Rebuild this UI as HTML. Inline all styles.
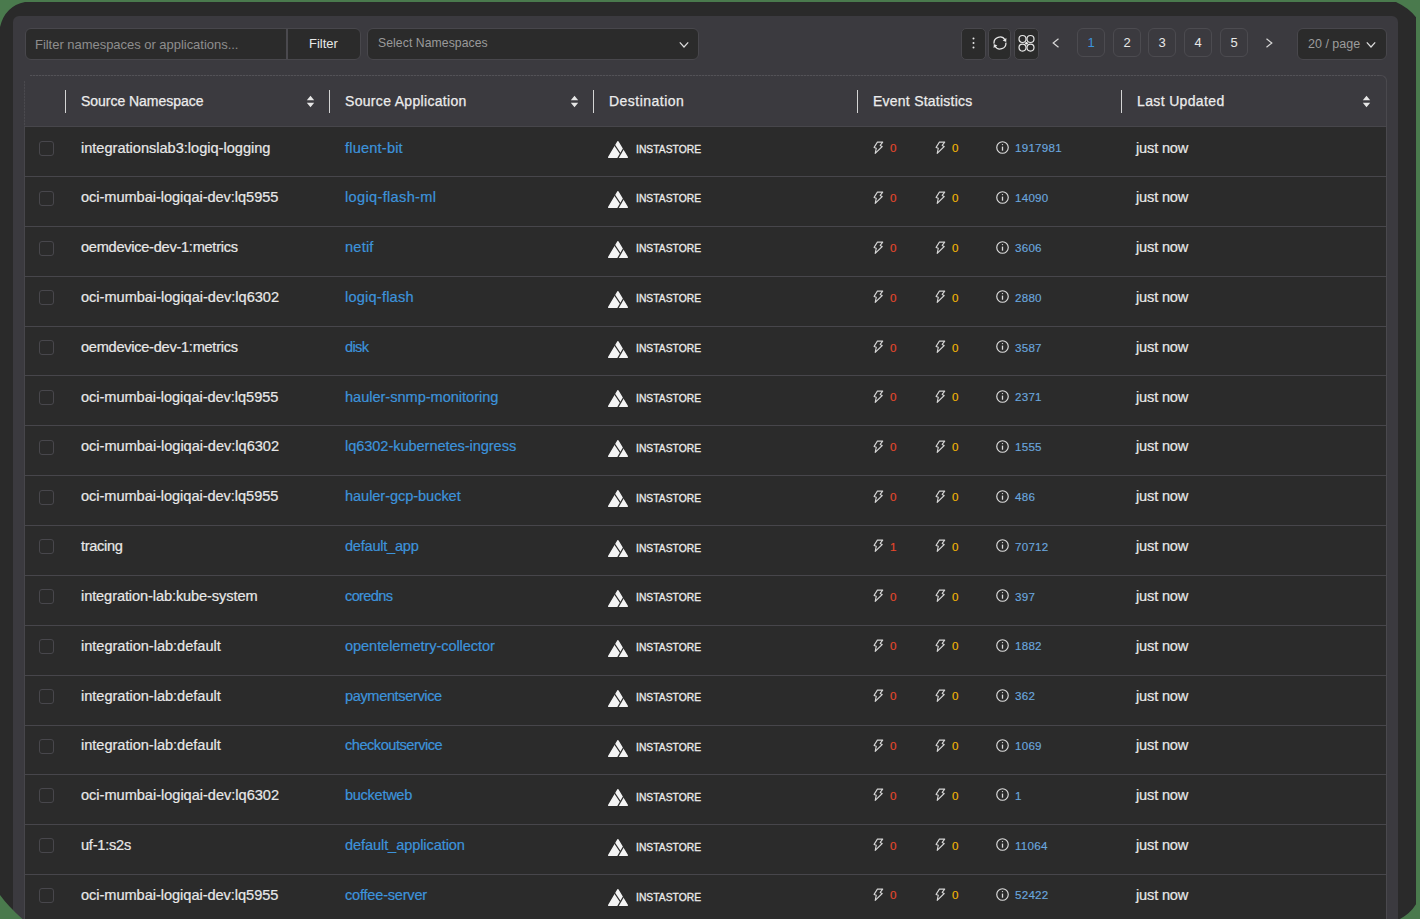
<!DOCTYPE html>
<html><head><meta charset="utf-8">
<style>
*{box-sizing:border-box;margin:0;padding:0}
html,body{width:1420px;height:919px;overflow:hidden;background:#4a7a4d;font-family:"Liberation Sans",sans-serif;color:#e8e8e8}
.frame{position:absolute;left:0;top:2px;width:1416px;height:917px;background:#2a2a2a}
.corners{position:absolute;left:0;top:0;z-index:10}
.panel{position:absolute;left:13px;top:16px;width:1385px;height:960px;background:#3b3a3f;border-radius:6px}
.inp{position:absolute;left:25px;top:28px;width:336px;height:32px;background:#2b2b2b;border:1px solid #48474c;border-radius:6px}
.inp .ph{position:absolute;left:9px;top:8px;font-size:13px;color:#8e8e8e;white-space:nowrap}
.inp .div{position:absolute;left:260px;top:0;width:1.5px;height:30px;background:#4a494e}
.inp .fb{position:absolute;left:283px;top:7px;font-size:13px;color:#e8e8e8}
.sel{position:absolute;left:367px;top:28px;width:332px;height:32px;background:#2b2b2b;border:1px solid #48474c;border-radius:6px}
.sel .ph{position:absolute;left:10px;top:7px;font-size:12.2px;color:#9a9a9a;white-space:nowrap}
.chev{position:absolute}
.ib{position:absolute;top:28px;height:32px;background:#2b2b2b;border:1px solid #48474c;border-radius:5px}
.pg{position:absolute;top:28px;width:28px;height:29px;border:1px solid #4c4b50;border-radius:6px;font-size:13px;text-align:center;line-height:27px;color:#e8e8e8}
.pgs{position:absolute;left:1297px;top:28px;width:90px;height:32px;background:#2b2b2b;border:1px solid #48474c;border-radius:6px}
.pgs .ph{position:absolute;left:10px;top:8px;font-size:12.5px;color:#9c9c9c;white-space:nowrap}
.table{position:absolute;left:24px;top:75px;width:1363px;height:900px;border:1px solid transparent}
.tb-top{position:absolute;left:30px;top:75px;width:1349px;height:1px;background:repeating-linear-gradient(90deg,#535257 0 2px,#424146 2px 3px)}
.tb-l{position:absolute;left:24px;top:81px;width:1px;height:840px;background:#47464b}
.tb-lh{position:absolute;left:24px;top:81px;width:1px;height:45px;background:repeating-linear-gradient(180deg,#4a494e 0 2px,#403f44 2px 3px)}
.tb-r{position:absolute;left:1386px;top:81px;width:1px;height:840px;background:#4a494e}
.tb-tr{position:absolute;left:1379px;top:75px;width:8px;height:7px;border-top:1px solid #4c4b50;border-right:1px solid #4c4b50;border-top-right-radius:6px}
.head{position:absolute;left:0;top:0;width:1361px;height:51px;background:#3b3a3f;border-bottom:1px solid #47464b}
.hs{position:absolute;top:14px;width:1px;height:23px;background:#d4d4d4}
.ht{position:absolute;top:17px;font-size:14px;color:#ececec;white-space:nowrap;-webkit-text-stroke:0.25px #ececec}
.sort{display:block}
.rows{position:absolute;left:0;top:51px;width:1361px;height:900px;background:#2b2b2b}
.row{position:absolute;left:0;width:1361px;height:49.875px;border-bottom:1px solid #47464b;}
.rc{position:absolute;left:0;width:1361px;height:49px}
.cb{position:absolute;left:14px;top:14px;width:15px;height:15px;border:1px solid #48474c;border-radius:3px}
.t{position:absolute;top:12.5px;font-size:14.6px;white-space:nowrap;line-height:18px;-webkit-text-stroke:0.2px currentColor}
.ns{left:56px;color:#e8e8e8}
.app{left:320px;color:#3d93db}
.upd{left:1111px;color:#e8e8e8}
.dest{position:absolute;left:581px;top:12px}
.logo{position:absolute;left:0;top:0}
.ins{position:absolute;left:30px;top:4.5px;font-size:10.3px;font-weight:normal;color:#ececec;white-space:nowrap;-webkit-text-stroke:0.3px #ececec;letter-spacing:0.02px}
.ev{position:absolute;top:14px}
.ev svg{position:absolute;left:0;top:0}
.ev span{position:absolute;top:0.3px;font-size:11.6px;white-space:nowrap;-webkit-text-stroke:0.15px currentColor}
.e1{left:848px} .e1 span{left:17px}
.e2{left:910px} .e2 span{left:17px}
.e3{left:971px} .e3 span{left:19px;letter-spacing:0.25px}
.red{color:#e5482b} .yel{color:#f2b705} .blu{color:#6aa6de}
</style></head><body>
<div class="frame"></div>
<div class="panel"></div>
<div class="inp"><span class="ph" style="letter-spacing:-0.031px">Filter namespaces or applications...</span><div class="div"></div><span class="fb">Filter</span></div>
<div class="sel"><span class="ph" style="letter-spacing:0.081px">Select Namespaces</span>
<svg class="chev" style="left:311px;top:12px" width="10" height="8" viewBox="0 0 10 8"><path d="M0.8 1.4 L5 6 L9.2 1.4" fill="none" stroke="#dedede" stroke-width="1.2"/></svg></div>
<div class="ib" style="left:961px;width:25px"><svg style="position:absolute;left:10px;top:8px" width="3" height="13" viewBox="0 0 3 13"><circle cx="1.5" cy="1.5" r="1" fill="#e8e8e8"/><circle cx="1.5" cy="6" r="1" fill="#e8e8e8"/><circle cx="1.5" cy="10.5" r="1" fill="#e8e8e8"/></svg></div>
<div class="ib" style="left:988px;width:23px"><svg style="position:absolute;left:3px;top:6px" width="16" height="16" viewBox="0 0 16 16"><g fill="none" stroke="#e6e6e6" stroke-width="1.3"><path d="M2.1 8.6 A5.9 5.9 0 0 1 13.1 5.0"/><path d="M13.9 7.6 A5.9 5.9 0 0 1 2.9 11.0"/></g><path d="M14.4 3.0 L14.2 6.9 L10.7 5.4 Z" fill="#e6e6e6"/><path d="M1.6 13.0 L1.8 9.1 L5.3 10.6 Z" fill="#e6e6e6"/></svg></div>
<div class="ib" style="left:1013.5px;width:25.5px"><svg style="position:absolute;left:3.5px;top:5px" width="18" height="19" viewBox="0 0 18 19"><g fill="none" stroke="#e6e6e6" stroke-width="1.2"><circle cx="4.5" cy="5" r="3.5"/><circle cx="12.5" cy="5" r="3.5"/><circle cx="4.5" cy="13.6" r="3.5"/><circle cx="12.5" cy="13.6" r="3.5"/></g><circle cx="8.5" cy="9.3" r="1.3" fill="#f4f4f4"/></svg></div>
<svg style="position:absolute;left:1052px;top:38px" width="8" height="10" viewBox="0 0 8 10"><path d="M6.5 0.8 L1.2 5 L6.5 9.2" fill="none" stroke="#d8d8d8" stroke-width="1.2"/></svg>
<div class="pg" style="left:1077px;color:#3d93db">1</div>
<div class="pg" style="left:1113px">2</div>
<div class="pg" style="left:1148px">3</div>
<div class="pg" style="left:1184px">4</div>
<div class="pg" style="left:1220px">5</div>
<svg style="position:absolute;left:1265px;top:38px" width="8" height="10" viewBox="0 0 8 10"><path d="M1.5 0.8 L6.8 5 L1.5 9.2" fill="none" stroke="#d8d8d8" stroke-width="1.2"/></svg>
<div class="pgs"><span class="ph">20 / page</span><svg class="chev" style="left:68px;top:11.5px" width="10" height="8" viewBox="0 0 10 8"><path d="M0.8 1.4 L5 6 L9.2 1.4" fill="none" stroke="#dedede" stroke-width="1.2"/></svg></div>
<div class="tb-top"></div><div class="tb-l"></div><div class="tb-lh"></div><div class="tb-r"></div>
<div class="table">
<div class="head">
<div class="hs" style="left:40px"></div>
<div class="ht" style="left:56px;letter-spacing:-0.033px">Source Namespace</div>
<span style="position:absolute;left:281px;top:19px"><svg class="sort" width="9" height="13" viewBox="0 0 9 13"><path d="M4.5 0.8 L8.2 5.2 L0.8 5.2 Z M4.5 12.2 L8.2 7.8 L0.8 7.8 Z" fill="#e6e6e6"/></svg></span>
<div class="hs" style="left:304px"></div>
<div class="ht" style="left:320px;letter-spacing:0.318px">Source Application</div>
<span style="position:absolute;left:545px;top:19px"><svg class="sort" width="9" height="13" viewBox="0 0 9 13"><path d="M4.5 0.8 L8.2 5.2 L0.8 5.2 Z M4.5 12.2 L8.2 7.8 L0.8 7.8 Z" fill="#e6e6e6"/></svg></span>
<div class="hs" style="left:568px"></div>
<div class="ht" style="left:584px;letter-spacing:0.480px">Destination</div>
<div class="hs" style="left:832px"></div>
<div class="ht" style="left:848px;letter-spacing:0.240px">Event Statistics</div>
<div class="hs" style="left:1096px"></div>
<div class="ht" style="left:1112px;letter-spacing:0.355px">Last Updated</div>
<span style="position:absolute;left:1337px;top:19px"><svg class="sort" width="9" height="13" viewBox="0 0 9 13"><path d="M4.5 0.8 L8.2 5.2 L0.8 5.2 Z M4.5 12.2 L8.2 7.8 L0.8 7.8 Z" fill="#e6e6e6"/></svg></span>
</div>
<div class="rows">
<div class="row" style="top:0.000px">
<div class="cb" style="margin-top:-0.00px"></div><div class="rc" style="top:-1.00px">
<div class="t ns" style="letter-spacing:-0.014px">integrationslab3:logiq-logging</div>
<div class="t app" style="letter-spacing:0.189px">fluent-bit</div>
<div class="t upd" style="letter-spacing:-0.171px">just now</div>
</div>
<div class="dest"><svg class="logo" width="24" height="21" viewBox="0 0 24 21"><polygon points="2.6,18.3 11.9,2.7 21.4,18.3" fill="#f4f4f4" stroke="#f4f4f4" stroke-width="1.3" stroke-linejoin="round"/><g stroke="#2b2b2b" stroke-width="1.3" stroke-linecap="butt"><line x1="7.2" y1="4.0" x2="14.3" y2="14.5"/><line x1="19.6" y1="6.0" x2="10.6" y2="21.5"/></g></svg><span class="ins">INSTASTORE</span></div>
<div class="ev e1" style="margin-top:-0.00px"><svg class="bolt" width="11" height="13" viewBox="0 0 11 13"><path d="M4.4 1.1 L9.7 1.1 L7.2 4.4 L9.2 5.5 L2.2 12.3 L3.3 7.2 L1.1 6.4 Z" fill="none" stroke="#d6d6d6" stroke-width="1.1" stroke-linejoin="round"/></svg><span class="red">0</span></div>
<div class="ev e2" style="margin-top:-0.00px"><svg class="bolt" width="11" height="13" viewBox="0 0 11 13"><path d="M4.4 1.1 L9.7 1.1 L7.2 4.4 L9.2 5.5 L2.2 12.3 L3.3 7.2 L1.1 6.4 Z" fill="none" stroke="#d6d6d6" stroke-width="1.1" stroke-linejoin="round"/></svg><span class="yel">0</span></div>
<div class="ev e3" style="margin-top:-0.00px"><svg class="info" width="13" height="13" viewBox="0 0 13 13"><circle cx="6.5" cy="6.5" r="5.75" fill="none" stroke="#dcdcdc" stroke-width="1.15"/><rect x="5.85" y="5.6" width="1.3" height="4.1" fill="#dcdcdc"/><circle cx="6.5" cy="3.6" r="0.7" fill="#dcdcdc"/></svg><span class="blu">1917981</span></div>
</div><div class="row" style="top:49.875px">
<div class="cb" style="margin-top:-0.07px"></div><div class="rc" style="top:-1.05px">
<div class="t ns" style="letter-spacing:-0.046px">oci-mumbai-logiqai-dev:lq5955</div>
<div class="t app" style="letter-spacing:0.323px">logiq-flash-ml</div>
<div class="t upd" style="letter-spacing:-0.171px">just now</div>
</div>
<div class="dest"><svg class="logo" width="24" height="21" viewBox="0 0 24 21"><polygon points="2.6,18.3 11.9,2.7 21.4,18.3" fill="#f4f4f4" stroke="#f4f4f4" stroke-width="1.3" stroke-linejoin="round"/><g stroke="#2b2b2b" stroke-width="1.3" stroke-linecap="butt"><line x1="7.2" y1="4.0" x2="14.3" y2="14.5"/><line x1="19.6" y1="6.0" x2="10.6" y2="21.5"/></g></svg><span class="ins">INSTASTORE</span></div>
<div class="ev e1" style="margin-top:-0.07px"><svg class="bolt" width="11" height="13" viewBox="0 0 11 13"><path d="M4.4 1.1 L9.7 1.1 L7.2 4.4 L9.2 5.5 L2.2 12.3 L3.3 7.2 L1.1 6.4 Z" fill="none" stroke="#d6d6d6" stroke-width="1.1" stroke-linejoin="round"/></svg><span class="red">0</span></div>
<div class="ev e2" style="margin-top:-0.07px"><svg class="bolt" width="11" height="13" viewBox="0 0 11 13"><path d="M4.4 1.1 L9.7 1.1 L7.2 4.4 L9.2 5.5 L2.2 12.3 L3.3 7.2 L1.1 6.4 Z" fill="none" stroke="#d6d6d6" stroke-width="1.1" stroke-linejoin="round"/></svg><span class="yel">0</span></div>
<div class="ev e3" style="margin-top:-0.07px"><svg class="info" width="13" height="13" viewBox="0 0 13 13"><circle cx="6.5" cy="6.5" r="5.75" fill="none" stroke="#dcdcdc" stroke-width="1.15"/><rect x="5.85" y="5.6" width="1.3" height="4.1" fill="#dcdcdc"/><circle cx="6.5" cy="3.6" r="0.7" fill="#dcdcdc"/></svg><span class="blu">14090</span></div>
</div><div class="row" style="top:99.750px">
<div class="cb" style="margin-top:-0.14px"></div><div class="rc" style="top:-1.11px">
<div class="t ns" style="letter-spacing:-0.273px">oemdevice-dev-1:metrics</div>
<div class="t app" style="letter-spacing:0.200px">netif</div>
<div class="t upd" style="letter-spacing:-0.171px">just now</div>
</div>
<div class="dest"><svg class="logo" width="24" height="21" viewBox="0 0 24 21"><polygon points="2.6,18.3 11.9,2.7 21.4,18.3" fill="#f4f4f4" stroke="#f4f4f4" stroke-width="1.3" stroke-linejoin="round"/><g stroke="#2b2b2b" stroke-width="1.3" stroke-linecap="butt"><line x1="7.2" y1="4.0" x2="14.3" y2="14.5"/><line x1="19.6" y1="6.0" x2="10.6" y2="21.5"/></g></svg><span class="ins">INSTASTORE</span></div>
<div class="ev e1" style="margin-top:-0.14px"><svg class="bolt" width="11" height="13" viewBox="0 0 11 13"><path d="M4.4 1.1 L9.7 1.1 L7.2 4.4 L9.2 5.5 L2.2 12.3 L3.3 7.2 L1.1 6.4 Z" fill="none" stroke="#d6d6d6" stroke-width="1.1" stroke-linejoin="round"/></svg><span class="red">0</span></div>
<div class="ev e2" style="margin-top:-0.14px"><svg class="bolt" width="11" height="13" viewBox="0 0 11 13"><path d="M4.4 1.1 L9.7 1.1 L7.2 4.4 L9.2 5.5 L2.2 12.3 L3.3 7.2 L1.1 6.4 Z" fill="none" stroke="#d6d6d6" stroke-width="1.1" stroke-linejoin="round"/></svg><span class="yel">0</span></div>
<div class="ev e3" style="margin-top:-0.14px"><svg class="info" width="13" height="13" viewBox="0 0 13 13"><circle cx="6.5" cy="6.5" r="5.75" fill="none" stroke="#dcdcdc" stroke-width="1.15"/><rect x="5.85" y="5.6" width="1.3" height="4.1" fill="#dcdcdc"/><circle cx="6.5" cy="3.6" r="0.7" fill="#dcdcdc"/></svg><span class="blu">3606</span></div>
</div><div class="row" style="top:149.625px">
<div class="cb" style="margin-top:-0.21px"></div><div class="rc" style="top:-1.17px">
<div class="t ns" style="letter-spacing:-0.025px">oci-mumbai-logiqai-dev:lq6302</div>
<div class="t app" style="letter-spacing:0.200px">logiq-flash</div>
<div class="t upd" style="letter-spacing:-0.171px">just now</div>
</div>
<div class="dest"><svg class="logo" width="24" height="21" viewBox="0 0 24 21"><polygon points="2.6,18.3 11.9,2.7 21.4,18.3" fill="#f4f4f4" stroke="#f4f4f4" stroke-width="1.3" stroke-linejoin="round"/><g stroke="#2b2b2b" stroke-width="1.3" stroke-linecap="butt"><line x1="7.2" y1="4.0" x2="14.3" y2="14.5"/><line x1="19.6" y1="6.0" x2="10.6" y2="21.5"/></g></svg><span class="ins">INSTASTORE</span></div>
<div class="ev e1" style="margin-top:-0.21px"><svg class="bolt" width="11" height="13" viewBox="0 0 11 13"><path d="M4.4 1.1 L9.7 1.1 L7.2 4.4 L9.2 5.5 L2.2 12.3 L3.3 7.2 L1.1 6.4 Z" fill="none" stroke="#d6d6d6" stroke-width="1.1" stroke-linejoin="round"/></svg><span class="red">0</span></div>
<div class="ev e2" style="margin-top:-0.21px"><svg class="bolt" width="11" height="13" viewBox="0 0 11 13"><path d="M4.4 1.1 L9.7 1.1 L7.2 4.4 L9.2 5.5 L2.2 12.3 L3.3 7.2 L1.1 6.4 Z" fill="none" stroke="#d6d6d6" stroke-width="1.1" stroke-linejoin="round"/></svg><span class="yel">0</span></div>
<div class="ev e3" style="margin-top:-0.21px"><svg class="info" width="13" height="13" viewBox="0 0 13 13"><circle cx="6.5" cy="6.5" r="5.75" fill="none" stroke="#dcdcdc" stroke-width="1.15"/><rect x="5.85" y="5.6" width="1.3" height="4.1" fill="#dcdcdc"/><circle cx="6.5" cy="3.6" r="0.7" fill="#dcdcdc"/></svg><span class="blu">2880</span></div>
</div><div class="row" style="top:199.500px">
<div class="cb" style="margin-top:-0.28px"></div><div class="rc" style="top:-1.22px">
<div class="t ns" style="letter-spacing:-0.273px">oemdevice-dev-1:metrics</div>
<div class="t app" style="letter-spacing:-0.633px">disk</div>
<div class="t upd" style="letter-spacing:-0.171px">just now</div>
</div>
<div class="dest"><svg class="logo" width="24" height="21" viewBox="0 0 24 21"><polygon points="2.6,18.3 11.9,2.7 21.4,18.3" fill="#f4f4f4" stroke="#f4f4f4" stroke-width="1.3" stroke-linejoin="round"/><g stroke="#2b2b2b" stroke-width="1.3" stroke-linecap="butt"><line x1="7.2" y1="4.0" x2="14.3" y2="14.5"/><line x1="19.6" y1="6.0" x2="10.6" y2="21.5"/></g></svg><span class="ins">INSTASTORE</span></div>
<div class="ev e1" style="margin-top:-0.28px"><svg class="bolt" width="11" height="13" viewBox="0 0 11 13"><path d="M4.4 1.1 L9.7 1.1 L7.2 4.4 L9.2 5.5 L2.2 12.3 L3.3 7.2 L1.1 6.4 Z" fill="none" stroke="#d6d6d6" stroke-width="1.1" stroke-linejoin="round"/></svg><span class="red">0</span></div>
<div class="ev e2" style="margin-top:-0.28px"><svg class="bolt" width="11" height="13" viewBox="0 0 11 13"><path d="M4.4 1.1 L9.7 1.1 L7.2 4.4 L9.2 5.5 L2.2 12.3 L3.3 7.2 L1.1 6.4 Z" fill="none" stroke="#d6d6d6" stroke-width="1.1" stroke-linejoin="round"/></svg><span class="yel">0</span></div>
<div class="ev e3" style="margin-top:-0.28px"><svg class="info" width="13" height="13" viewBox="0 0 13 13"><circle cx="6.5" cy="6.5" r="5.75" fill="none" stroke="#dcdcdc" stroke-width="1.15"/><rect x="5.85" y="5.6" width="1.3" height="4.1" fill="#dcdcdc"/><circle cx="6.5" cy="3.6" r="0.7" fill="#dcdcdc"/></svg><span class="blu">3587</span></div>
</div><div class="row" style="top:249.375px">
<div class="cb" style="margin-top:-0.35px"></div><div class="rc" style="top:-1.27px">
<div class="t ns" style="letter-spacing:-0.046px">oci-mumbai-logiqai-dev:lq5955</div>
<div class="t app" style="letter-spacing:-0.033px">hauler-snmp-monitoring</div>
<div class="t upd" style="letter-spacing:-0.171px">just now</div>
</div>
<div class="dest"><svg class="logo" width="24" height="21" viewBox="0 0 24 21"><polygon points="2.6,18.3 11.9,2.7 21.4,18.3" fill="#f4f4f4" stroke="#f4f4f4" stroke-width="1.3" stroke-linejoin="round"/><g stroke="#2b2b2b" stroke-width="1.3" stroke-linecap="butt"><line x1="7.2" y1="4.0" x2="14.3" y2="14.5"/><line x1="19.6" y1="6.0" x2="10.6" y2="21.5"/></g></svg><span class="ins">INSTASTORE</span></div>
<div class="ev e1" style="margin-top:-0.35px"><svg class="bolt" width="11" height="13" viewBox="0 0 11 13"><path d="M4.4 1.1 L9.7 1.1 L7.2 4.4 L9.2 5.5 L2.2 12.3 L3.3 7.2 L1.1 6.4 Z" fill="none" stroke="#d6d6d6" stroke-width="1.1" stroke-linejoin="round"/></svg><span class="red">0</span></div>
<div class="ev e2" style="margin-top:-0.35px"><svg class="bolt" width="11" height="13" viewBox="0 0 11 13"><path d="M4.4 1.1 L9.7 1.1 L7.2 4.4 L9.2 5.5 L2.2 12.3 L3.3 7.2 L1.1 6.4 Z" fill="none" stroke="#d6d6d6" stroke-width="1.1" stroke-linejoin="round"/></svg><span class="yel">0</span></div>
<div class="ev e3" style="margin-top:-0.35px"><svg class="info" width="13" height="13" viewBox="0 0 13 13"><circle cx="6.5" cy="6.5" r="5.75" fill="none" stroke="#dcdcdc" stroke-width="1.15"/><rect x="5.85" y="5.6" width="1.3" height="4.1" fill="#dcdcdc"/><circle cx="6.5" cy="3.6" r="0.7" fill="#dcdcdc"/></svg><span class="blu">2371</span></div>
</div><div class="row" style="top:299.250px">
<div class="cb" style="margin-top:-0.42px"></div><div class="rc" style="top:-1.33px">
<div class="t ns" style="letter-spacing:-0.025px">oci-mumbai-logiqai-dev:lq6302</div>
<div class="t app" style="letter-spacing:-0.067px">lq6302-kubernetes-ingress</div>
<div class="t upd" style="letter-spacing:-0.171px">just now</div>
</div>
<div class="dest"><svg class="logo" width="24" height="21" viewBox="0 0 24 21"><polygon points="2.6,18.3 11.9,2.7 21.4,18.3" fill="#f4f4f4" stroke="#f4f4f4" stroke-width="1.3" stroke-linejoin="round"/><g stroke="#2b2b2b" stroke-width="1.3" stroke-linecap="butt"><line x1="7.2" y1="4.0" x2="14.3" y2="14.5"/><line x1="19.6" y1="6.0" x2="10.6" y2="21.5"/></g></svg><span class="ins">INSTASTORE</span></div>
<div class="ev e1" style="margin-top:-0.42px"><svg class="bolt" width="11" height="13" viewBox="0 0 11 13"><path d="M4.4 1.1 L9.7 1.1 L7.2 4.4 L9.2 5.5 L2.2 12.3 L3.3 7.2 L1.1 6.4 Z" fill="none" stroke="#d6d6d6" stroke-width="1.1" stroke-linejoin="round"/></svg><span class="red">0</span></div>
<div class="ev e2" style="margin-top:-0.42px"><svg class="bolt" width="11" height="13" viewBox="0 0 11 13"><path d="M4.4 1.1 L9.7 1.1 L7.2 4.4 L9.2 5.5 L2.2 12.3 L3.3 7.2 L1.1 6.4 Z" fill="none" stroke="#d6d6d6" stroke-width="1.1" stroke-linejoin="round"/></svg><span class="yel">0</span></div>
<div class="ev e3" style="margin-top:-0.42px"><svg class="info" width="13" height="13" viewBox="0 0 13 13"><circle cx="6.5" cy="6.5" r="5.75" fill="none" stroke="#dcdcdc" stroke-width="1.15"/><rect x="5.85" y="5.6" width="1.3" height="4.1" fill="#dcdcdc"/><circle cx="6.5" cy="3.6" r="0.7" fill="#dcdcdc"/></svg><span class="blu">1555</span></div>
</div><div class="row" style="top:349.125px">
<div class="cb" style="margin-top:-0.49px"></div><div class="rc" style="top:-1.39px">
<div class="t ns" style="letter-spacing:-0.046px">oci-mumbai-logiqai-dev:lq5955</div>
<div class="t app" style="letter-spacing:-0.069px">hauler-gcp-bucket</div>
<div class="t upd" style="letter-spacing:-0.171px">just now</div>
</div>
<div class="dest"><svg class="logo" width="24" height="21" viewBox="0 0 24 21"><polygon points="2.6,18.3 11.9,2.7 21.4,18.3" fill="#f4f4f4" stroke="#f4f4f4" stroke-width="1.3" stroke-linejoin="round"/><g stroke="#2b2b2b" stroke-width="1.3" stroke-linecap="butt"><line x1="7.2" y1="4.0" x2="14.3" y2="14.5"/><line x1="19.6" y1="6.0" x2="10.6" y2="21.5"/></g></svg><span class="ins">INSTASTORE</span></div>
<div class="ev e1" style="margin-top:-0.49px"><svg class="bolt" width="11" height="13" viewBox="0 0 11 13"><path d="M4.4 1.1 L9.7 1.1 L7.2 4.4 L9.2 5.5 L2.2 12.3 L3.3 7.2 L1.1 6.4 Z" fill="none" stroke="#d6d6d6" stroke-width="1.1" stroke-linejoin="round"/></svg><span class="red">0</span></div>
<div class="ev e2" style="margin-top:-0.49px"><svg class="bolt" width="11" height="13" viewBox="0 0 11 13"><path d="M4.4 1.1 L9.7 1.1 L7.2 4.4 L9.2 5.5 L2.2 12.3 L3.3 7.2 L1.1 6.4 Z" fill="none" stroke="#d6d6d6" stroke-width="1.1" stroke-linejoin="round"/></svg><span class="yel">0</span></div>
<div class="ev e3" style="margin-top:-0.49px"><svg class="info" width="13" height="13" viewBox="0 0 13 13"><circle cx="6.5" cy="6.5" r="5.75" fill="none" stroke="#dcdcdc" stroke-width="1.15"/><rect x="5.85" y="5.6" width="1.3" height="4.1" fill="#dcdcdc"/><circle cx="6.5" cy="3.6" r="0.7" fill="#dcdcdc"/></svg><span class="blu">486</span></div>
</div><div class="row" style="top:399.000px">
<div class="cb" style="margin-top:-0.56px"></div><div class="rc" style="top:-1.44px">
<div class="t ns" style="letter-spacing:-0.333px">tracing</div>
<div class="t app" style="letter-spacing:-0.250px">default_app</div>
<div class="t upd" style="letter-spacing:-0.171px">just now</div>
</div>
<div class="dest"><svg class="logo" width="24" height="21" viewBox="0 0 24 21"><polygon points="2.6,18.3 11.9,2.7 21.4,18.3" fill="#f4f4f4" stroke="#f4f4f4" stroke-width="1.3" stroke-linejoin="round"/><g stroke="#2b2b2b" stroke-width="1.3" stroke-linecap="butt"><line x1="7.2" y1="4.0" x2="14.3" y2="14.5"/><line x1="19.6" y1="6.0" x2="10.6" y2="21.5"/></g></svg><span class="ins">INSTASTORE</span></div>
<div class="ev e1" style="margin-top:-0.56px"><svg class="bolt" width="11" height="13" viewBox="0 0 11 13"><path d="M4.4 1.1 L9.7 1.1 L7.2 4.4 L9.2 5.5 L2.2 12.3 L3.3 7.2 L1.1 6.4 Z" fill="none" stroke="#d6d6d6" stroke-width="1.1" stroke-linejoin="round"/></svg><span class="red">1</span></div>
<div class="ev e2" style="margin-top:-0.56px"><svg class="bolt" width="11" height="13" viewBox="0 0 11 13"><path d="M4.4 1.1 L9.7 1.1 L7.2 4.4 L9.2 5.5 L2.2 12.3 L3.3 7.2 L1.1 6.4 Z" fill="none" stroke="#d6d6d6" stroke-width="1.1" stroke-linejoin="round"/></svg><span class="yel">0</span></div>
<div class="ev e3" style="margin-top:-0.56px"><svg class="info" width="13" height="13" viewBox="0 0 13 13"><circle cx="6.5" cy="6.5" r="5.75" fill="none" stroke="#dcdcdc" stroke-width="1.15"/><rect x="5.85" y="5.6" width="1.3" height="4.1" fill="#dcdcdc"/><circle cx="6.5" cy="3.6" r="0.7" fill="#dcdcdc"/></svg><span class="blu">70712</span></div>
</div><div class="row" style="top:448.875px">
<div class="cb" style="margin-top:-0.63px"></div><div class="rc" style="top:-1.50px">
<div class="t ns" style="letter-spacing:-0.104px">integration-lab:kube-system</div>
<div class="t app" style="letter-spacing:-0.650px">coredns</div>
<div class="t upd" style="letter-spacing:-0.171px">just now</div>
</div>
<div class="dest"><svg class="logo" width="24" height="21" viewBox="0 0 24 21"><polygon points="2.6,18.3 11.9,2.7 21.4,18.3" fill="#f4f4f4" stroke="#f4f4f4" stroke-width="1.3" stroke-linejoin="round"/><g stroke="#2b2b2b" stroke-width="1.3" stroke-linecap="butt"><line x1="7.2" y1="4.0" x2="14.3" y2="14.5"/><line x1="19.6" y1="6.0" x2="10.6" y2="21.5"/></g></svg><span class="ins">INSTASTORE</span></div>
<div class="ev e1" style="margin-top:-0.63px"><svg class="bolt" width="11" height="13" viewBox="0 0 11 13"><path d="M4.4 1.1 L9.7 1.1 L7.2 4.4 L9.2 5.5 L2.2 12.3 L3.3 7.2 L1.1 6.4 Z" fill="none" stroke="#d6d6d6" stroke-width="1.1" stroke-linejoin="round"/></svg><span class="red">0</span></div>
<div class="ev e2" style="margin-top:-0.63px"><svg class="bolt" width="11" height="13" viewBox="0 0 11 13"><path d="M4.4 1.1 L9.7 1.1 L7.2 4.4 L9.2 5.5 L2.2 12.3 L3.3 7.2 L1.1 6.4 Z" fill="none" stroke="#d6d6d6" stroke-width="1.1" stroke-linejoin="round"/></svg><span class="yel">0</span></div>
<div class="ev e3" style="margin-top:-0.63px"><svg class="info" width="13" height="13" viewBox="0 0 13 13"><circle cx="6.5" cy="6.5" r="5.75" fill="none" stroke="#dcdcdc" stroke-width="1.15"/><rect x="5.85" y="5.6" width="1.3" height="4.1" fill="#dcdcdc"/><circle cx="6.5" cy="3.6" r="0.7" fill="#dcdcdc"/></svg><span class="blu">397</span></div>
</div><div class="row" style="top:498.750px">
<div class="cb" style="margin-top:-0.70px"></div><div class="rc" style="top:-1.55px">
<div class="t ns" style="letter-spacing:-0.027px">integration-lab:default</div>
<div class="t app" style="letter-spacing:-0.082px">opentelemetry-collector</div>
<div class="t upd" style="letter-spacing:-0.171px">just now</div>
</div>
<div class="dest"><svg class="logo" width="24" height="21" viewBox="0 0 24 21"><polygon points="2.6,18.3 11.9,2.7 21.4,18.3" fill="#f4f4f4" stroke="#f4f4f4" stroke-width="1.3" stroke-linejoin="round"/><g stroke="#2b2b2b" stroke-width="1.3" stroke-linecap="butt"><line x1="7.2" y1="4.0" x2="14.3" y2="14.5"/><line x1="19.6" y1="6.0" x2="10.6" y2="21.5"/></g></svg><span class="ins">INSTASTORE</span></div>
<div class="ev e1" style="margin-top:-0.70px"><svg class="bolt" width="11" height="13" viewBox="0 0 11 13"><path d="M4.4 1.1 L9.7 1.1 L7.2 4.4 L9.2 5.5 L2.2 12.3 L3.3 7.2 L1.1 6.4 Z" fill="none" stroke="#d6d6d6" stroke-width="1.1" stroke-linejoin="round"/></svg><span class="red">0</span></div>
<div class="ev e2" style="margin-top:-0.70px"><svg class="bolt" width="11" height="13" viewBox="0 0 11 13"><path d="M4.4 1.1 L9.7 1.1 L7.2 4.4 L9.2 5.5 L2.2 12.3 L3.3 7.2 L1.1 6.4 Z" fill="none" stroke="#d6d6d6" stroke-width="1.1" stroke-linejoin="round"/></svg><span class="yel">0</span></div>
<div class="ev e3" style="margin-top:-0.70px"><svg class="info" width="13" height="13" viewBox="0 0 13 13"><circle cx="6.5" cy="6.5" r="5.75" fill="none" stroke="#dcdcdc" stroke-width="1.15"/><rect x="5.85" y="5.6" width="1.3" height="4.1" fill="#dcdcdc"/><circle cx="6.5" cy="3.6" r="0.7" fill="#dcdcdc"/></svg><span class="blu">1882</span></div>
</div><div class="row" style="top:548.625px">
<div class="cb" style="margin-top:-0.77px"></div><div class="rc" style="top:-1.60px">
<div class="t ns" style="letter-spacing:-0.027px">integration-lab:default</div>
<div class="t app" style="letter-spacing:-0.385px">paymentservice</div>
<div class="t upd" style="letter-spacing:-0.171px">just now</div>
</div>
<div class="dest"><svg class="logo" width="24" height="21" viewBox="0 0 24 21"><polygon points="2.6,18.3 11.9,2.7 21.4,18.3" fill="#f4f4f4" stroke="#f4f4f4" stroke-width="1.3" stroke-linejoin="round"/><g stroke="#2b2b2b" stroke-width="1.3" stroke-linecap="butt"><line x1="7.2" y1="4.0" x2="14.3" y2="14.5"/><line x1="19.6" y1="6.0" x2="10.6" y2="21.5"/></g></svg><span class="ins">INSTASTORE</span></div>
<div class="ev e1" style="margin-top:-0.77px"><svg class="bolt" width="11" height="13" viewBox="0 0 11 13"><path d="M4.4 1.1 L9.7 1.1 L7.2 4.4 L9.2 5.5 L2.2 12.3 L3.3 7.2 L1.1 6.4 Z" fill="none" stroke="#d6d6d6" stroke-width="1.1" stroke-linejoin="round"/></svg><span class="red">0</span></div>
<div class="ev e2" style="margin-top:-0.77px"><svg class="bolt" width="11" height="13" viewBox="0 0 11 13"><path d="M4.4 1.1 L9.7 1.1 L7.2 4.4 L9.2 5.5 L2.2 12.3 L3.3 7.2 L1.1 6.4 Z" fill="none" stroke="#d6d6d6" stroke-width="1.1" stroke-linejoin="round"/></svg><span class="yel">0</span></div>
<div class="ev e3" style="margin-top:-0.77px"><svg class="info" width="13" height="13" viewBox="0 0 13 13"><circle cx="6.5" cy="6.5" r="5.75" fill="none" stroke="#dcdcdc" stroke-width="1.15"/><rect x="5.85" y="5.6" width="1.3" height="4.1" fill="#dcdcdc"/><circle cx="6.5" cy="3.6" r="0.7" fill="#dcdcdc"/></svg><span class="blu">362</span></div>
</div><div class="row" style="top:598.500px">
<div class="cb" style="margin-top:-0.84px"></div><div class="rc" style="top:-1.66px">
<div class="t ns" style="letter-spacing:-0.027px">integration-lab:default</div>
<div class="t app" style="letter-spacing:-0.493px">checkoutservice</div>
<div class="t upd" style="letter-spacing:-0.171px">just now</div>
</div>
<div class="dest"><svg class="logo" width="24" height="21" viewBox="0 0 24 21"><polygon points="2.6,18.3 11.9,2.7 21.4,18.3" fill="#f4f4f4" stroke="#f4f4f4" stroke-width="1.3" stroke-linejoin="round"/><g stroke="#2b2b2b" stroke-width="1.3" stroke-linecap="butt"><line x1="7.2" y1="4.0" x2="14.3" y2="14.5"/><line x1="19.6" y1="6.0" x2="10.6" y2="21.5"/></g></svg><span class="ins">INSTASTORE</span></div>
<div class="ev e1" style="margin-top:-0.84px"><svg class="bolt" width="11" height="13" viewBox="0 0 11 13"><path d="M4.4 1.1 L9.7 1.1 L7.2 4.4 L9.2 5.5 L2.2 12.3 L3.3 7.2 L1.1 6.4 Z" fill="none" stroke="#d6d6d6" stroke-width="1.1" stroke-linejoin="round"/></svg><span class="red">0</span></div>
<div class="ev e2" style="margin-top:-0.84px"><svg class="bolt" width="11" height="13" viewBox="0 0 11 13"><path d="M4.4 1.1 L9.7 1.1 L7.2 4.4 L9.2 5.5 L2.2 12.3 L3.3 7.2 L1.1 6.4 Z" fill="none" stroke="#d6d6d6" stroke-width="1.1" stroke-linejoin="round"/></svg><span class="yel">0</span></div>
<div class="ev e3" style="margin-top:-0.84px"><svg class="info" width="13" height="13" viewBox="0 0 13 13"><circle cx="6.5" cy="6.5" r="5.75" fill="none" stroke="#dcdcdc" stroke-width="1.15"/><rect x="5.85" y="5.6" width="1.3" height="4.1" fill="#dcdcdc"/><circle cx="6.5" cy="3.6" r="0.7" fill="#dcdcdc"/></svg><span class="blu">1069</span></div>
</div><div class="row" style="top:648.375px">
<div class="cb" style="margin-top:-0.91px"></div><div class="rc" style="top:-1.71px">
<div class="t ns" style="letter-spacing:-0.025px">oci-mumbai-logiqai-dev:lq6302</div>
<div class="t app" style="letter-spacing:-0.312px">bucketweb</div>
<div class="t upd" style="letter-spacing:-0.171px">just now</div>
</div>
<div class="dest"><svg class="logo" width="24" height="21" viewBox="0 0 24 21"><polygon points="2.6,18.3 11.9,2.7 21.4,18.3" fill="#f4f4f4" stroke="#f4f4f4" stroke-width="1.3" stroke-linejoin="round"/><g stroke="#2b2b2b" stroke-width="1.3" stroke-linecap="butt"><line x1="7.2" y1="4.0" x2="14.3" y2="14.5"/><line x1="19.6" y1="6.0" x2="10.6" y2="21.5"/></g></svg><span class="ins">INSTASTORE</span></div>
<div class="ev e1" style="margin-top:-0.91px"><svg class="bolt" width="11" height="13" viewBox="0 0 11 13"><path d="M4.4 1.1 L9.7 1.1 L7.2 4.4 L9.2 5.5 L2.2 12.3 L3.3 7.2 L1.1 6.4 Z" fill="none" stroke="#d6d6d6" stroke-width="1.1" stroke-linejoin="round"/></svg><span class="red">0</span></div>
<div class="ev e2" style="margin-top:-0.91px"><svg class="bolt" width="11" height="13" viewBox="0 0 11 13"><path d="M4.4 1.1 L9.7 1.1 L7.2 4.4 L9.2 5.5 L2.2 12.3 L3.3 7.2 L1.1 6.4 Z" fill="none" stroke="#d6d6d6" stroke-width="1.1" stroke-linejoin="round"/></svg><span class="yel">0</span></div>
<div class="ev e3" style="margin-top:-0.91px"><svg class="info" width="13" height="13" viewBox="0 0 13 13"><circle cx="6.5" cy="6.5" r="5.75" fill="none" stroke="#dcdcdc" stroke-width="1.15"/><rect x="5.85" y="5.6" width="1.3" height="4.1" fill="#dcdcdc"/><circle cx="6.5" cy="3.6" r="0.7" fill="#dcdcdc"/></svg><span class="blu">1</span></div>
</div><div class="row" style="top:698.250px">
<div class="cb" style="margin-top:-0.98px"></div><div class="rc" style="top:-1.77px">
<div class="t ns" style="letter-spacing:-0.243px">uf-1:s2s</div>
<div class="t app" style="letter-spacing:-0.100px">default_application</div>
<div class="t upd" style="letter-spacing:-0.171px">just now</div>
</div>
<div class="dest"><svg class="logo" width="24" height="21" viewBox="0 0 24 21"><polygon points="2.6,18.3 11.9,2.7 21.4,18.3" fill="#f4f4f4" stroke="#f4f4f4" stroke-width="1.3" stroke-linejoin="round"/><g stroke="#2b2b2b" stroke-width="1.3" stroke-linecap="butt"><line x1="7.2" y1="4.0" x2="14.3" y2="14.5"/><line x1="19.6" y1="6.0" x2="10.6" y2="21.5"/></g></svg><span class="ins">INSTASTORE</span></div>
<div class="ev e1" style="margin-top:-0.98px"><svg class="bolt" width="11" height="13" viewBox="0 0 11 13"><path d="M4.4 1.1 L9.7 1.1 L7.2 4.4 L9.2 5.5 L2.2 12.3 L3.3 7.2 L1.1 6.4 Z" fill="none" stroke="#d6d6d6" stroke-width="1.1" stroke-linejoin="round"/></svg><span class="red">0</span></div>
<div class="ev e2" style="margin-top:-0.98px"><svg class="bolt" width="11" height="13" viewBox="0 0 11 13"><path d="M4.4 1.1 L9.7 1.1 L7.2 4.4 L9.2 5.5 L2.2 12.3 L3.3 7.2 L1.1 6.4 Z" fill="none" stroke="#d6d6d6" stroke-width="1.1" stroke-linejoin="round"/></svg><span class="yel">0</span></div>
<div class="ev e3" style="margin-top:-0.98px"><svg class="info" width="13" height="13" viewBox="0 0 13 13"><circle cx="6.5" cy="6.5" r="5.75" fill="none" stroke="#dcdcdc" stroke-width="1.15"/><rect x="5.85" y="5.6" width="1.3" height="4.1" fill="#dcdcdc"/><circle cx="6.5" cy="3.6" r="0.7" fill="#dcdcdc"/></svg><span class="blu">11064</span></div>
</div><div class="row" style="top:748.125px">
<div class="cb" style="margin-top:-1.05px"></div><div class="rc" style="top:-1.82px">
<div class="t ns" style="letter-spacing:-0.046px">oci-mumbai-logiqai-dev:lq5955</div>
<div class="t app" style="letter-spacing:-0.225px">coffee-server</div>
<div class="t upd" style="letter-spacing:-0.171px">just now</div>
</div>
<div class="dest"><svg class="logo" width="24" height="21" viewBox="0 0 24 21"><polygon points="2.6,18.3 11.9,2.7 21.4,18.3" fill="#f4f4f4" stroke="#f4f4f4" stroke-width="1.3" stroke-linejoin="round"/><g stroke="#2b2b2b" stroke-width="1.3" stroke-linecap="butt"><line x1="7.2" y1="4.0" x2="14.3" y2="14.5"/><line x1="19.6" y1="6.0" x2="10.6" y2="21.5"/></g></svg><span class="ins">INSTASTORE</span></div>
<div class="ev e1" style="margin-top:-1.05px"><svg class="bolt" width="11" height="13" viewBox="0 0 11 13"><path d="M4.4 1.1 L9.7 1.1 L7.2 4.4 L9.2 5.5 L2.2 12.3 L3.3 7.2 L1.1 6.4 Z" fill="none" stroke="#d6d6d6" stroke-width="1.1" stroke-linejoin="round"/></svg><span class="red">0</span></div>
<div class="ev e2" style="margin-top:-1.05px"><svg class="bolt" width="11" height="13" viewBox="0 0 11 13"><path d="M4.4 1.1 L9.7 1.1 L7.2 4.4 L9.2 5.5 L2.2 12.3 L3.3 7.2 L1.1 6.4 Z" fill="none" stroke="#d6d6d6" stroke-width="1.1" stroke-linejoin="round"/></svg><span class="yel">0</span></div>
<div class="ev e3" style="margin-top:-1.05px"><svg class="info" width="13" height="13" viewBox="0 0 13 13"><circle cx="6.5" cy="6.5" r="5.75" fill="none" stroke="#dcdcdc" stroke-width="1.15"/><rect x="5.85" y="5.6" width="1.3" height="4.1" fill="#dcdcdc"/><circle cx="6.5" cy="3.6" r="0.7" fill="#dcdcdc"/></svg><span class="blu">52422</span></div>
</div>
</div>
</div>
<div class="tb-tr"></div>
<svg class="corners" width="1420" height="919" viewBox="0 0 1420 919"><path fill="#4a7a4d" fill-rule="evenodd" d="M0 0 H1420 V919 H0 Z M25 2 H1396 Q1409 8 1416 17.3 V904.3 Q1410 914 1399 919.5 H23 Q8 906 0 894.9 V27 Q5 6 25 2 Z"/></svg>
</body></html>
